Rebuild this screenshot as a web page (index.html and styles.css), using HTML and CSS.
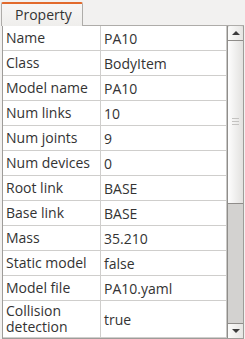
FILE: index.html
```html
<html>
<head>
	<title>Property</title>
	<link rel="stylesheet" href="styles.css">
</head>
<body>
	<div class="tabbar">
		<div class="tab">Property</div>
		<div class="tabrest"><span class="dots"></span></div>
	</div>

	<div class="panel">
		<div class="view">
			<div class="table">
				<div class="row"><div class="key">Name</div><div class="val">PA10</div></div>
				<div class="row"><div class="key">Class</div><div class="val">BodyItem</div></div>
				<div class="row"><div class="key">Model name</div><div class="val">PA10</div></div>
				<div class="row"><div class="key">Num links</div><div class="val">10</div></div>
				<div class="row"><div class="key">Num joints</div><div class="val">9</div></div>
				<div class="row"><div class="key">Num devices</div><div class="val">0</div></div>
				<div class="row"><div class="key">Root link</div><div class="val">BASE</div></div>
				<div class="row"><div class="key">Base link</div><div class="val">BASE</div></div>
				<div class="row"><div class="key">Mass</div><div class="val">35.210</div></div>
				<div class="row"><div class="key">Static model</div><div class="val">false</div></div>
				<div class="row"><div class="key">Model file</div><div class="val">PA10.yaml</div></div>
				<div class="row tall"><div class="key">Collision detection</div><div class="val">true</div></div>
			</div>

			<div class="scrollbar">
				<div class="sbtn up"><span class="arrow-up"></span></div>
				<div class="thumb"><span class="grip"></span></div>
				<div class="track"></div>
				<div class="sbtn down"><span class="arrow-down"></span></div>
			</div>
		</div>
	</div>
</body>
</html>
```

FILE: styles.css
```css
body {
	margin: 0;
	width: 245px;
	height: 339px;
	overflow: hidden;
	background-color: #f2f1f0;
	font-family: "Open Sans", sans-serif;
	font-size: 14px;
	color: #333333;
}

.tabbar {
	display: flex;
	align-items: flex-end;
	height: 26px;
}

.tab {
	width: 82px;
	height: 24px;
	box-sizing: border-box;
	margin-left: 1px;
	padding-left: 13px;
	padding-top: 1px;
	line-height: 20px;
	border: 1px solid #aeaca9;
	border-top: 2px solid #e26a2c;
	border-bottom: none;
	border-radius: 2px 2px 0 0;
	background: linear-gradient(#f7f6f5, #efeeec);
}

.tabrest {
	flex: 1;
	height: 26px;
	margin-right: 1px;
	border-bottom: 1px solid #aeaca9;
	position: relative;
}

.dots {
	position: absolute;
	left: 19px;
	top: 0;
	width: 38px;
	border-top: 1px dotted #b5b3b0;
}

.panel {
	padding: 0 1px 0 2px;
}

.view {
	display: flex;
	height: 312px;
	border: 1px solid #9e9c99;
	border-top: none;
	background-color: #ffffff;
}

.table {
	flex: 1;
	overflow: hidden;
	border-right: 1px solid #c9c8c6;
}

.row {
	display: flex;
	height: 24px;
	border-bottom: 1px solid #cfcecc;
}

.row.tall {
	height: 36px;
}

.key {
	width: 94px;
	padding-left: 3px;
	border-right: 1px solid #cfcecc;
	display: flex;
	align-items: center;
	line-height: 16px;
}

.val {
	flex: 1;
	padding-left: 3px;
	display: flex;
	align-items: center;
	white-space: nowrap;
}

.scrollbar {
	width: 15px;
	display: flex;
	flex-direction: column;
	border-left: 1px solid #8f8d8a;
	background-color: #d3d2d0;
}

.sbtn {
	height: 14px;
	background: linear-gradient(90deg, #fbfbfa, #e6e5e3);
	display: flex;
	align-items: center;
	justify-content: center;
}

.sbtn.up {
	border-bottom: 1px solid #8f8d8a;
	border-radius: 2px 2px 0 0;
}

.sbtn.down {
	border-top: 1px solid #8f8d8a;
}

.arrow-up {
	width: 0;
	height: 0;
	border-left: 4px solid transparent;
	border-right: 4px solid transparent;
	border-bottom: 4px solid #3c3c3c;
}

.arrow-down {
	width: 0;
	height: 0;
	border-left: 4px solid transparent;
	border-right: 4px solid transparent;
	border-top: 4px solid #3c3c3c;
}

.thumb {
	height: 162px;
	border-bottom: 1px solid #8f8d8a;
	background: linear-gradient(90deg, #fdfdfd, #e2e1df);
	display: flex;
	justify-content: center;
}

.grip {
	margin-top: 77px;
	width: 7px;
	height: 7px;
	background: repeating-linear-gradient(#c4c3c1 0, #c4c3c1 1px, transparent 1px, transparent 3px);
}

.track {
	flex: 1;
}
```
